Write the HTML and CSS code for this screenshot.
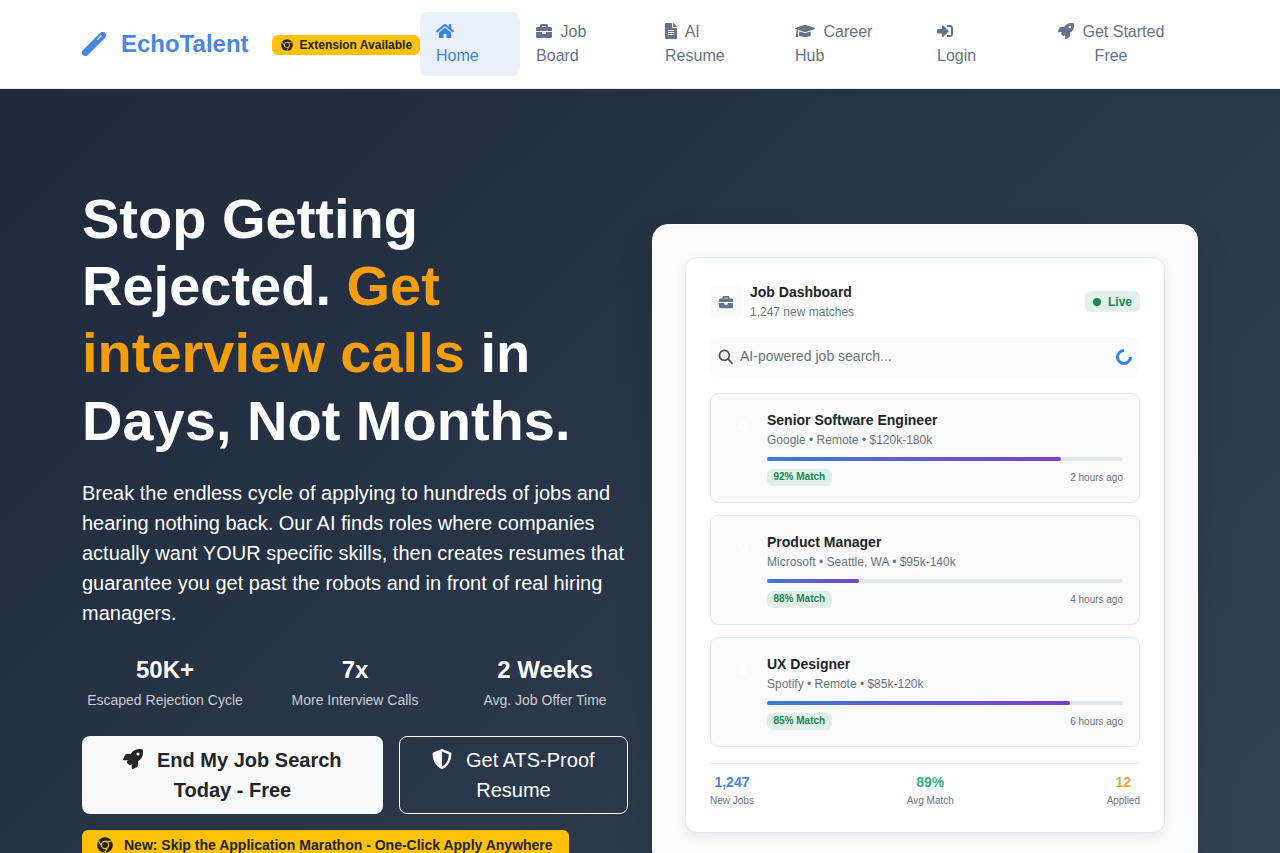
FILE: index.html
```html
<!DOCTYPE html>
<html lang="en">
<head>
  <meta charset="UTF-8">
  <meta name="viewport" content="width=device-width, initial-scale=1.0">
  <title>EchoTalent</title>
  <link rel="stylesheet" href="styles.css">
</head>
<body>
  <svg class="sprite" xmlns="http://www.w3.org/2000/svg">
    <symbol id="i-wand" viewBox="0 0 24 24"><path d="M3.5 20.5L20.5 3.5" fill="none" stroke="#4a86e0" stroke-width="7" stroke-linecap="round"/><path d="M15.7 7.3L19 4" fill="none" stroke="#fff" stroke-width="1.2" stroke-linecap="round"/></symbol>
    <symbol id="i-home" viewBox="0 0 576 512"><path d="M280.37 148.26L96 300.11V464a16 16 0 0 0 16 16l112.06-.29a16 16 0 0 0 15.92-16V368a16 16 0 0 1 16-16h64a16 16 0 0 1 16 16v95.64a16 16 0 0 0 16 16.05L464 480a16 16 0 0 0 16-16V300L295.67 148.26a12.19 12.19 0 0 0-15.3 0zM571.6 251.47L488 182.56V44.05a12 12 0 0 0-12-12h-56a12 12 0 0 0-12 12v72.61L318.47 43a48 48 0 0 0-61 0L4.34 251.47a12 12 0 0 0-1.6 16.9l25.5 31A12 12 0 0 0 45.15 301l235.22-193.74a12.19 12.19 0 0 1 15.3 0L530.9 301a12 12 0 0 0 16.9-1.6l25.5-31a12 12 0 0 0-1.7-16.93z"/></symbol>
    <symbol id="i-briefcase" viewBox="0 0 512 512"><path d="M320 336c0 8.84-7.16 16-16 16h-96c-8.84 0-16-7.16-16-16v-48H0v144c0 25.6 22.4 48 48 48h416c25.6 0 48-22.4 48-48V288H320v48zm144-208h-80V80c0-25.6-22.4-48-48-48H176c-25.6 0-48 22.4-48 48v48H48c-25.6 0-48 22.4-48 48v80h512v-80c0-25.6-22.4-48-48-48zm-144 0H192V96h128v32z"/></symbol>
    <symbol id="i-file" viewBox="0 0 384 512"><path d="M224 136V0H24C10.7 0 0 10.7 0 24v464c0 13.3 10.7 24 24 24h336c13.3 0 24-10.7 24-24V160H248c-13.2 0-24-10.8-24-24zm64 236c0 6.6-5.4 12-12 12H108c-6.6 0-12-5.4-12-12v-8c0-6.6 5.4-12 12-12h168c6.6 0 12 5.4 12 12v8zm0-64c0 6.6-5.4 12-12 12H108c-6.6 0-12-5.4-12-12v-8c0-6.6 5.4-12 12-12h168c6.6 0 12 5.4 12 12v8zm0-72v8c0 6.6-5.4 12-12 12H108c-6.6 0-12-5.4-12-12v-8c0-6.6 5.4-12 12-12h168c6.6 0 12 5.4 12 12zm96-114.1v6.1H256V0h6.1c6.4 0 12.5 2.5 17 7l97.9 98c4.5 4.5 7 10.6 7 16.9z"/></symbol>
    <symbol id="i-cap" viewBox="0 0 640 512"><path d="M622.34 153.2L343.4 67.5c-15.2-4.67-31.6-4.67-46.79 0L17.66 153.2c-23.54 7.23-23.54 38.36 0 45.59l48.63 14.94c-10.67 13.19-17.23 29.28-17.88 46.9C38.78 266.15 32 276.11 32 288c0 10.78 5.68 19.85 13.86 25.65L20.33 428.53C18.11 438.52 25.71 448 35.94 448h56.11c10.24 0 17.84-9.48 15.62-19.47L82.14 313.65C90.32 307.85 96 298.78 96 288c0-11.57-6.47-21.25-15.66-26.87.76-15.02 8.44-28.3 20.69-36.72L296.6 284.5c9.06 2.78 26.44 6.25 46.79 0l278.95-85.7c23.55-7.24 23.55-38.36 0-45.6zM352.79 315.09c-28.53 8.76-52.84 3.92-65.59 0l-145.02-44.55L128 384c0 35.35 85.96 64 192 64s192-28.65 192-64l-14.18-113.47-145.03 44.56z"/></symbol>
    <symbol id="i-login" viewBox="0 0 512 512"><path d="M416 448h-84c-6.6 0-12-5.4-12-12v-40c0-6.6 5.4-12 12-12h84c17.7 0 32-14.3 32-32V160c0-17.7-14.3-32-32-32h-84c-6.6 0-12-5.4-12-12V76c0-6.6 5.4-12 12-12h84c53 0 96 43 96 96v192c0 53-43 96-96 96zm-47-201L201 79c-15-15-41-4.5-41 17v96H24c-13.3 0-24 10.7-24 24v96c0 13.3 10.7 24 24 24h136v96c0 21.5 26 32 41 17l168-168c9.3-9.4 9.3-24.6 0-34z"/></symbol>
    <symbol id="i-rocket" viewBox="0 0 512 512"><path d="M505.12 19.09c-1.19-5.53-6.66-11-12.21-12.18C460.72 0 435.51 0 410.41 0 307.18 0 245.27 55.2 199.05 128H94.84c-16.35.02-35.56 11.88-42.89 26.48L2.52 253.3A28.4 28.4 0 0 0 0 264a24 24 0 0 0 24.01 24h103.81l-22.47 22.47c-11.37 11.36-13 32.26 0 45.25l50.9 50.91c11.16 11.18 32.16 13.15 45.28 0l22.47-22.47V488a24 24 0 0 0 24.01 24 28.56 28.56 0 0 0 10.71-2.52l98.73-49.39c14.63-7.3 26.5-26.5 26.5-42.86V312.8c72.6-46.31 128.04-108.41 128.04-211.1.01-25.2.01-50.4-6.95-82.61zM384.04 168a40 40 0 1 1 40.01-40 40.02 40.02 0 0 1-40.01 40z"/></symbol>
    <symbol id="i-shield" viewBox="0 0 512 512"><path d="M466.5 83.7l-192-80a48.15 48.15 0 0 0-36.9 0l-192 80C27.7 91.1 16 108.6 16 128c0 198.5 114.5 335.7 221.5 380.3 11.8 4.9 25.1 4.9 36.9 0C360.1 472.6 496 349.3 496 128c0-19.4-11.7-36.9-29.5-44.3zM256.1 446.3l-.1-381 175.9 73.3c-3.3 151.4-82.1 261.1-175.8 307.7z"/></symbol>
    <symbol id="i-chrome" viewBox="0 0 16 16"><circle cx="8" cy="8" r="7.8" fill="#212529"/><circle cx="8" cy="8" r="3.6" fill="none" stroke="#ffc107" stroke-width="1.1"/><path d="M8 4.4h6.6M4.9 9.8L1.6 4M11.1 9.8l-3.4 5.8" fill="none" stroke="#ffc107" stroke-width="1.1"/></symbol>
  </svg>

  <header class="navbar">
    <a class="brand" href="#">
      <svg class="brand-icon"><use href="#i-wand"/></svg>
      <span>EchoTalent</span>
    </a>
    <span class="ext-badge"><svg class="ext-icon"><use href="#i-chrome"/></svg>Extension Available</span>
    <nav class="nav-links">
      <a class="nav-link active" href="#"><svg class="ic ic-home"><use href="#i-home"/></svg><br>Home</a>
      <a class="nav-link" href="#"><svg class="ic"><use href="#i-briefcase"/></svg> Job<br>Board</a>
      <a class="nav-link" href="#"><svg class="ic ic-file"><use href="#i-file"/></svg> AI<br>Resume</a>
      <a class="nav-link" href="#"><svg class="ic ic-cap"><use href="#i-cap"/></svg> Career<br>Hub</a>
      <a class="nav-link" href="#"><svg class="ic"><use href="#i-login"/></svg><br>Login</a>
      <a class="nav-link center" href="#"><svg class="ic"><use href="#i-rocket"/></svg> Get Started<br>Free</a>
    </nav>
  </header>

  <section class="hero">
    <div class="hero-left">
      <h1>Stop Getting Rejected. <span class="accent">Get interview calls</span> in Days, Not Months.</h1>
      <p class="lead">Break the endless cycle of applying to hundreds of jobs and hearing nothing back. Our AI finds roles where companies actually want YOUR specific skills, then creates resumes that guarantee you get past the robots and in front of real hiring managers.</p>
      <div class="hero-stats">
        <div class="hero-stat"><div class="num">50K+</div><div class="lbl">Escaped Rejection Cycle</div></div>
        <div class="hero-stat"><div class="num">7x</div><div class="lbl">More Interview Calls</div></div>
        <div class="hero-stat"><div class="num">2 Weeks</div><div class="lbl">Avg. Job Offer Time</div></div>
      </div>
      <div class="hero-btns">
        <a class="btn btn-light" href="#"><svg class="btn-icon"><use href="#i-rocket"/></svg> End My Job Search Today - Free</a>
        <a class="btn btn-outline" href="#"><svg class="btn-icon"><use href="#i-shield"/></svg> Get ATS-Proof Resume</a>
      </div>
      <div class="new-badge"><svg class="new-icon"><use href="#i-chrome"/></svg>New: Skip the Application Marathon - One-Click Apply Anywhere</div>
    </div>

    <div class="hero-right">
      <div class="dash">
        <div class="dash-head">
          <div class="dash-logo"><svg class="ic-14"><use href="#i-briefcase"/></svg></div>
          <div class="dash-title">
            <div class="t">Job Dashboard</div>
            <div class="s">1,247 new matches</div>
          </div>
          <span class="live"><i class="dot"></i>Live</span>
        </div>

        <div class="search">
          <svg class="search-icon" viewBox="0 0 16 16"><circle cx="6.8" cy="6.8" r="5.3"/><path d="M10.7 10.7l4.3 4.3"/></svg>
          <span>AI-powered job search...</span>
          <i class="spinner"></i>
        </div>

        <div class="job">
          <div class="job-logo">G</div>
          <div class="job-body">
            <div class="job-title">Senior Software Engineer</div>
            <div class="job-meta">Google • Remote • $120k-180k</div>
            <div class="bar"><div class="fill" style="width:294px"></div></div>
            <div class="job-foot"><span class="match">92% Match</span><span class="ago">2 hours ago</span></div>
          </div>
        </div>
        <div class="job">
          <div class="job-logo">M</div>
          <div class="job-body">
            <div class="job-title">Product Manager</div>
            <div class="job-meta">Microsoft • Seattle, WA • $95k-140k</div>
            <div class="bar"><div class="fill" style="width:92px"></div></div>
            <div class="job-foot"><span class="match">88% Match</span><span class="ago">4 hours ago</span></div>
          </div>
        </div>
        <div class="job">
          <div class="job-logo">S</div>
          <div class="job-body">
            <div class="job-title">UX Designer</div>
            <div class="job-meta">Spotify • Remote • $85k-120k</div>
            <div class="bar"><div class="fill" style="width:303px"></div></div>
            <div class="job-foot"><span class="match">85% Match</span><span class="ago">6 hours ago</span></div>
          </div>
        </div>

        <div class="dash-foot">
          <div class="foot-stat"><div class="v blue">1,247</div><div class="l">New Jobs</div></div>
          <div class="foot-stat"><div class="v green">89%</div><div class="l">Avg Match</div></div>
          <div class="foot-stat"><div class="v amber">12</div><div class="l">Applied</div></div>
        </div>
      </div>
    </div>
  </section>
</body>
</html>
```

FILE: styles.css
```css
* {
  box-sizing: border-box;
}
html, body {
  height: 100%;
}
body {
  margin: 0;
  overflow: hidden;
  font-family: "Liberation Sans", Arial, sans-serif;
  font-size: 16px;
  line-height: 1.5;
  color: #212529;
  background-color: #fff;
}
a {
  text-decoration: none;
}
.sprite {
  display: none;
}

/* navbar */
.navbar {
  display: flex;
  align-items: center;
  height: 89px;
  padding: 0 100px 0 82px;
  background-color: #fff;
  border-bottom: 1px solid #e2e8f0;
}
.brand {
  display: flex;
  align-items: center;
  flex: none;
  gap: 15px;
  font-size: 24px;
  font-weight: 700;
  color: #4a86e0;
}
.brand-icon {
  width: 24px;
  height: 24px;
}
.ext-badge {
  display: flex;
  align-items: center;
  flex: none;
  gap: 7px;
  margin: 2px 0 0 23px;
  padding: 4px 8px 4px 9px;
  font-size: 12px;
  line-height: 12px;
  font-weight: 700;
  white-space: nowrap;
  background-color: #ffc107;
  border-radius: 6px;
}
.ext-icon {
  width: 12px;
  height: 12px;
}
.nav-links {
  display: grid;
  flex: none;
  grid-template-columns: 100px 129px 130px 142px 121px 138px;
}
.nav-link {
  padding: 8px 16px;
  color: #64748b;
  white-space: nowrap;
  border-radius: 8px;
}
.nav-link.active {
  color: #3b82f6;
  background-color: #eaf1fb;
}
.nav-link.center {
  text-align: center;
}
.ic {
  width: 16px;
  height: 16px;
  margin-right: 4px;
  fill: #64748b;
  vertical-align: -2px;
}
.ic-home {
  width: 18px;
  fill: #3b82f6;
}
.ic-file {
  width: 12px;
}
.ic-cap {
  width: 20px;
}

/* hero */
.hero {
  display: grid;
  grid-template-columns: 546px 546px;
  column-gap: 24px;
  align-items: start;
  height: 764px;
  padding: 96px 82px 0;
  color: #fff;
  background: linear-gradient(135deg, #1e293b 0%, #334155 100%);
}
h1 {
  margin: 0 0 24px;
  font-size: 56px;
  line-height: 1.2;
  font-weight: 700;
}
.accent {
  color: #f59e0b;
}
.lead {
  margin: 0 0 27px;
  font-size: 20px;
  line-height: 30px;
}
.hero-stats {
  display: grid;
  grid-template-columns: repeat(3, 190px);
  margin: 0 -12px 25px;
  text-align: center;
}
.num {
  font-size: 24px;
  line-height: 29px;
  font-weight: 700;
  margin-bottom: 6px;
}
.lbl {
  font-size: 14px;
  line-height: 21px;
  color: rgba(255, 255, 255, 0.75);
}
.hero-btns {
  display: grid;
  grid-template-columns: 301px 229px;
  column-gap: 16px;
  margin-bottom: 16px;
}
.btn {
  display: block;
  padding: 8px 16px;
  font-size: 20px;
  line-height: 30px;
  text-align: center;
  border: 1px solid transparent;
  border-radius: 8px;
}
.btn-light {
  font-weight: 700;
  color: #212529;
  background-color: #f8f9fa;
}
.btn-outline {
  color: #fff;
  border-color: #f8f9fa;
}
.btn-icon {
  width: 20px;
  height: 20px;
  margin-right: 8px;
  fill: currentColor;
  vertical-align: -2px;
}
.new-badge {
  display: inline-flex;
  align-items: center;
  gap: 11px;
  padding: 4px 16px 4px 15px;
  font-size: 14px;
  line-height: 22px;
  font-weight: 700;
  color: #212529;
  background-color: #ffc107;
  border-radius: 6px;
}
.new-icon {
  width: 16px;
  height: 16px;
}

/* dashboard mockup */
.hero-right {
  margin-top: 39px;
  padding: 32px;
  background-color: #fafbfd;
  border: 1px solid #fff;
  border-radius: 16px;
  box-shadow: 0 20px 40px rgba(0, 0, 0, 0.1);
}
.dash {
  padding: 24px;
  color: #212529;
  background-color: #fff;
  border: 1px solid #e2e8f0;
  border-radius: 12px;
  box-shadow: 0 4px 12px rgba(0, 0, 0, 0.08);
}
.dash-head {
  display: flex;
  align-items: center;
  gap: 8px;
  margin-bottom: 16px;
}
.dash-logo {
  display: flex;
  align-items: center;
  justify-content: center;
  width: 32px;
  height: 32px;
  background-color: #f8fafc;
  border-radius: 6px;
}
.ic-14 {
  width: 14px;
  height: 14px;
  fill: #64748b;
}
.dash-title {
  flex: 1;
}
.dash-title .t {
  font-size: 14px;
  line-height: 21px;
  font-weight: 700;
}
.dash-title .s {
  font-size: 12px;
  line-height: 18px;
  color: #6c757d;
}
.live {
  display: flex;
  align-items: center;
  gap: 7px;
  padding: 2px 8px 1px;
  font-size: 12px;
  line-height: 18px;
  font-weight: 700;
  color: #198754;
  background-color: #e3f1ea;
  border-radius: 6px;
}
.dot {
  width: 8px;
  height: 8px;
  background-color: #198754;
  border-radius: 50%;
}
.search {
  display: flex;
  align-items: center;
  gap: 7px;
  height: 40px;
  margin-bottom: 16px;
  padding: 0 8px 1px;
  font-size: 14px;
  color: #6c757d;
  background-color: #f8fafc;
  border-radius: 8px;
}
.search-icon {
  width: 15px;
  height: 15px;
  fill: none;
  stroke: #495057;
  stroke-width: 1.8;
  stroke-linecap: round;
}
.search span {
  flex: 1;
}
.spinner {
  width: 16px;
  height: 16px;
  border: 3px solid #3b82f6;
  border-right-color: transparent;
  border-radius: 50%;
  transform: rotate(-45deg);
}
.job {
  display: flex;
  gap: 8px;
  margin-bottom: 12px;
  padding: 16px;
  background-color: #f8fafc;
  border: 1px solid #e2e8f0;
  border-radius: 8px;
}
.job-logo {
  flex: none;
  width: 32px;
  height: 32px;
  font-size: 12px;
  line-height: 32px;
  font-weight: 700;
  color: #fff;
  text-align: center;
}
.job-body {
  flex: 1;
}
.job-title {
  font-size: 14px;
  line-height: 21px;
  font-weight: 700;
}
.job-meta {
  font-size: 12px;
  line-height: 18px;
  color: #6c757d;
}
.bar {
  height: 4px;
  margin: 8px 0;
  background-color: #e2e8f0;
  border-radius: 2px;
}
.fill {
  height: 4px;
  background: linear-gradient(90deg, #3b7dd8, #7c3fc4);
  border-radius: 2px;
}
.job-foot {
  display: flex;
  align-items: center;
  justify-content: space-between;
}
.match {
  padding: 0 6.5px 2px;
  font-size: 10px;
  line-height: 15px;
  font-weight: 700;
  color: #198754;
  background-color: #e0efe8;
  border-radius: 6px;
}
.ago {
  font-size: 10px;
  line-height: 15px;
  color: #6c757d;
}
.dash-foot {
  display: flex;
  justify-content: space-between;
  margin-top: 16px;
  padding-top: 8px;
  border-top: 1px solid #e2e8f0;
  text-align: center;
}
.foot-stat .v {
  font-size: 14px;
  line-height: 21px;
  font-weight: 700;
}
.foot-stat .l {
  font-size: 10px;
  line-height: 15px;
  color: #6c757d;
}
.blue {
  color: #4a86e0;
}
.green {
  color: #2fb38a;
}
.amber {
  color: #e6a83a;
}
```
